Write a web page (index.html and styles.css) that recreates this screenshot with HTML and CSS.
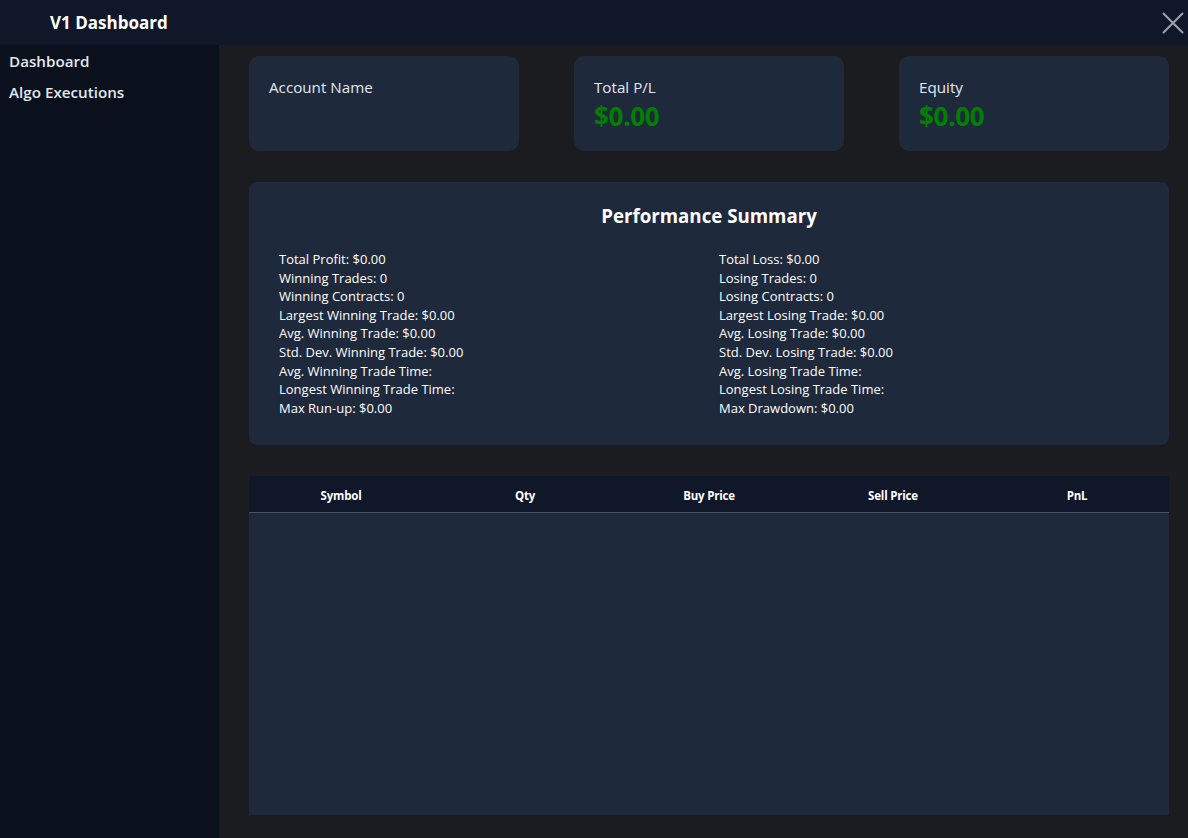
FILE: index.html
```html
<!DOCTYPE html>
<html lang="en">
<head>
<meta charset="utf-8">
<title>V1 Dashboard</title>
<link rel="stylesheet" href="styles.css">
</head>
<body>
<header class="topbar">
  <h1 class="title">V1 Dashboard</h1>
  <button class="close" aria-label="Close">
    <svg width="22" height="22" viewBox="0 0 22 22"><path d="M1 1L21 21M21 1L1 21" stroke="#9ca3af" stroke-width="2" fill="none"/></svg>
  </button>
</header>
<div class="layout">
  <nav class="sidebar">
    <a class="nav-item">Dashboard</a>
    <a class="nav-item">Algo Executions</a>
  </nav>
  <main class="main">
    <section class="cards">
      <div class="card">
        <div class="card-label">Account Name</div>
      </div>
      <div class="card">
        <div class="card-label">Total P/L</div>
        <div class="card-value">$0.00</div>
      </div>
      <div class="card">
        <div class="card-label">Equity</div>
        <div class="card-value">$0.00</div>
      </div>
    </section>
    <section class="summary">
      <h2 class="summary-title">Performance Summary</h2>
      <div class="summary-grid">
        <ul class="stat-list">
          <li>Total Profit: $0.00</li>
          <li>Winning Trades: 0</li>
          <li>Winning Contracts: 0</li>
          <li>Largest Winning Trade: $0.00</li>
          <li>Avg. Winning Trade: $0.00</li>
          <li>Std. Dev. Winning Trade: $0.00</li>
          <li>Avg. Winning Trade Time: </li>
          <li>Longest Winning Trade Time: </li>
          <li>Max Run-up: $0.00</li>
        </ul>
        <ul class="stat-list">
          <li>Total Loss: $0.00</li>
          <li>Losing Trades: 0</li>
          <li>Losing Contracts: 0</li>
          <li>Largest Losing Trade: $0.00</li>
          <li>Avg. Losing Trade: $0.00</li>
          <li>Std. Dev. Losing Trade: $0.00</li>
          <li>Avg. Losing Trade Time: </li>
          <li>Longest Losing Trade Time: </li>
          <li>Max Drawdown: $0.00</li>
        </ul>
      </div>
    </section>
    <section class="table-wrap">
      <table class="trades">
        <thead>
          <tr><th>Symbol</th><th>Qty</th><th>Buy Price</th><th>Sell Price</th><th>PnL</th></tr>
        </thead>
        <tbody></tbody>
      </table>
    </section>
  </main>
</div>
</body>
</html>
```
FILE: styles.css
```css
* { box-sizing: border-box; }
html, body { margin: 0; padding: 0; height: 100%; }
body {
  font-family: "Open Sans", "Noto Sans", "Liberation Sans", sans-serif;
  background: #1b1c20;
  color: #e2e8f0;
  display: flex;
  flex-direction: column;
  overflow: hidden;
}
.topbar {
  height: 45px;
  flex: none;
  background: #0f1729;
  display: flex;
  align-items: center;
  justify-content: space-between;
  padding: 0 4px 0 50px;
}
.title {
  margin: 0;
  font-size: 17px;
  font-weight: 700;
  color: #ffffff;
}
.close {
  background: none;
  border: 0;
  padding: 0;
  width: 22px;
  height: 22px;
  display: flex;
}
.layout {
  flex: 1;
  display: flex;
  min-height: 0;
}
.sidebar {
  width: 219px;
  flex: none;
  background: #0a101c;
  display: flex;
  flex-direction: column;
  padding: 1px 9px;
}
.nav-item {
  font-size: 15.2px;
  font-weight: 600;
  color: #e2e8f0;
  line-height: 31px;
}
.main {
  flex: 1;
  padding: 11px 19px 23px 30px;
  display: flex;
  flex-direction: column;
  gap: 31px;
}
.cards {
  display: grid;
  grid-template-columns: repeat(3, 270px);
  justify-content: space-between;
}
.card {
  height: 95px;
  background: #1e293b;
  border-radius: 10px;
  padding: 21px 20px;
}
.card-label {
  font-size: 15.2px;
  color: #e2e8f0;
  line-height: 20px;
}
.card-value {
  font-size: 26px;
  font-weight: 700;
  color: #008000;
  line-height: 32px;
  margin-top: 3px;
  letter-spacing: -0.3px;
}
.summary {
  background: #1e293b;
  border-radius: 8px;
  padding: 20px 30px 28px;
  height: 263px;
  flex: none;
}
.summary-title {
  margin: 0 0 22px;
  text-align: center;
  font-size: 18.7px;
  font-weight: 700;
  color: #ffffff;
  line-height: 28px;
}
.summary-grid {
  display: grid;
  grid-template-columns: 1fr 1fr;
  column-gap: 20px;
}
.stat-list {
  list-style: none;
  margin: 0;
  padding: 0;
  font-size: 13px;
  line-height: 18.6px;
  color: #ffffff;
  margin-top: -2px;
}
.table-wrap {
  flex: 1;
  background: #1e293b;
}
.trades {
  width: 100%;
  border-collapse: collapse;
  table-layout: fixed;
}
.trades th {
  background: #0f1729;
  color: #ffffff;
  font-size: 11.5px;
  font-weight: 700;
  height: 36px;
  padding: 4px 0 0;
  border-bottom: 1px solid #4b5563;
  text-align: center;
  letter-spacing: -0.2px;
}
```
